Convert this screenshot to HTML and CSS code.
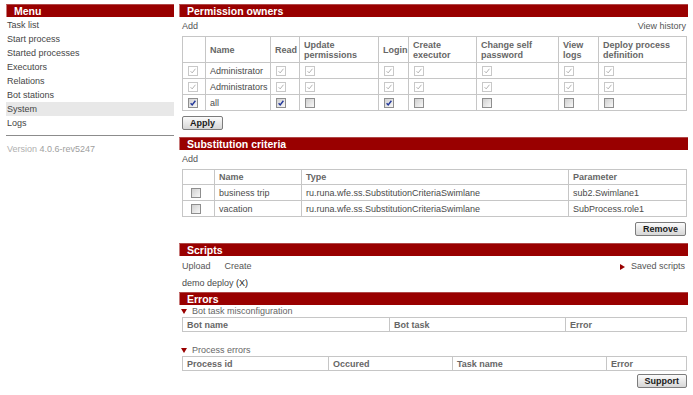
FILE: index.html
```html
<!DOCTYPE html>
<html>
<head>
<meta charset="utf-8">
<title>System</title>
<link rel="stylesheet" href="styles.css">
</head>
<body>
<div class="page">
  <aside class="sidebar">
    <div class="bar">Menu</div>
    <ul class="menu">
      <li>Task list</li>
      <li>Start process</li>
      <li>Started processes</li>
      <li>Executors</li>
      <li>Relations</li>
      <li>Bot stations</li>
      <li class="active">System</li>
      <li>Logs</li>
    </ul>
    <div class="divider"></div>
    <div class="version">Version <span class="ver-num">4.0.6-rev5247</span></div>
  </aside>

  <main class="main">
    <section class="section">
      <div class="bar">Permission owners</div>
      <div class="toolbar"><span class="link">Add</span><span class="link">View history</span></div>
      <table class="grid perm">
        <colgroup>
          <col class="p1"><col class="p2"><col class="p3"><col class="p4"><col class="p5">
          <col class="p6"><col class="p7"><col class="p8"><col class="p9">
        </colgroup>
        <thead>
          <tr>
            <th></th>
            <th>Name</th>
            <th>Read</th>
            <th>Update<br>permissions</th>
            <th>Login</th>
            <th>Create<br>executor</th>
            <th>Change self<br>password</th>
            <th>View<br>logs</th>
            <th>Deploy process<br>definition</th>
          </tr>
        </thead>
        <tbody>
          <tr>
            <td class="cbc"><span class="cb dis"><svg viewBox="0 0 8 8"><path d="M1.6 4.2 L3.2 5.9 L6.4 1.8"/></svg></span></td>
            <td>Administrator</td>
            <td class="cbc"><span class="cb dis"><svg viewBox="0 0 8 8"><path d="M1.6 4.2 L3.2 5.9 L6.4 1.8"/></svg></span></td>
            <td class="cbc"><span class="cb dis"><svg viewBox="0 0 8 8"><path d="M1.6 4.2 L3.2 5.9 L6.4 1.8"/></svg></span></td>
            <td class="cbc"><span class="cb dis"><svg viewBox="0 0 8 8"><path d="M1.6 4.2 L3.2 5.9 L6.4 1.8"/></svg></span></td>
            <td class="cbc"><span class="cb dis"><svg viewBox="0 0 8 8"><path d="M1.6 4.2 L3.2 5.9 L6.4 1.8"/></svg></span></td>
            <td class="cbc"><span class="cb dis"><svg viewBox="0 0 8 8"><path d="M1.6 4.2 L3.2 5.9 L6.4 1.8"/></svg></span></td>
            <td class="cbc"><span class="cb dis"><svg viewBox="0 0 8 8"><path d="M1.6 4.2 L3.2 5.9 L6.4 1.8"/></svg></span></td>
            <td class="cbc"><span class="cb dis"><svg viewBox="0 0 8 8"><path d="M1.6 4.2 L3.2 5.9 L6.4 1.8"/></svg></span></td>
          </tr>
          <tr>
            <td class="cbc"><span class="cb dis"><svg viewBox="0 0 8 8"><path d="M1.6 4.2 L3.2 5.9 L6.4 1.8"/></svg></span></td>
            <td>Administrators</td>
            <td class="cbc"><span class="cb dis"><svg viewBox="0 0 8 8"><path d="M1.6 4.2 L3.2 5.9 L6.4 1.8"/></svg></span></td>
            <td class="cbc"><span class="cb dis"><svg viewBox="0 0 8 8"><path d="M1.6 4.2 L3.2 5.9 L6.4 1.8"/></svg></span></td>
            <td class="cbc"><span class="cb dis"><svg viewBox="0 0 8 8"><path d="M1.6 4.2 L3.2 5.9 L6.4 1.8"/></svg></span></td>
            <td class="cbc"><span class="cb dis"><svg viewBox="0 0 8 8"><path d="M1.6 4.2 L3.2 5.9 L6.4 1.8"/></svg></span></td>
            <td class="cbc"><span class="cb dis"><svg viewBox="0 0 8 8"><path d="M1.6 4.2 L3.2 5.9 L6.4 1.8"/></svg></span></td>
            <td class="cbc"><span class="cb dis"><svg viewBox="0 0 8 8"><path d="M1.6 4.2 L3.2 5.9 L6.4 1.8"/></svg></span></td>
            <td class="cbc"><span class="cb dis"><svg viewBox="0 0 8 8"><path d="M1.6 4.2 L3.2 5.9 L6.4 1.8"/></svg></span></td>
          </tr>
          <tr>
            <td class="cbc"><span class="cb"><svg viewBox="0 0 8 8"><path d="M1.6 4.2 L3.2 5.9 L6.4 1.8"/></svg></span></td>
            <td>all</td>
            <td class="cbc"><span class="cb"><svg viewBox="0 0 8 8"><path d="M1.6 4.2 L3.2 5.9 L6.4 1.8"/></svg></span></td>
            <td class="cbc"><span class="cb"></span></td>
            <td class="cbc"><span class="cb"><svg viewBox="0 0 8 8"><path d="M1.6 4.2 L3.2 5.9 L6.4 1.8"/></svg></span></td>
            <td class="cbc"><span class="cb"></span></td>
            <td class="cbc"><span class="cb"></span></td>
            <td class="cbc"><span class="cb"></span></td>
            <td class="cbc"><span class="cb"></span></td>
          </tr>
        </tbody>
      </table>
      <div class="actions"><button class="btn">Apply</button></div>
    </section>

    <section class="section">
      <div class="bar">Substitution criteria</div>
      <div class="toolbar"><span class="link">Add</span></div>
      <table class="grid subst">
        <colgroup><col class="s1"><col class="s2"><col class="s3"><col class="s4"></colgroup>
        <thead>
          <tr><th></th><th>Name</th><th>Type</th><th>Parameter</th></tr>
        </thead>
        <tbody>
          <tr>
            <td class="cbc wide"><span class="cb"></span></td>
            <td>business trip</td>
            <td>ru.runa.wfe.ss.SubstitutionCriteriaSwimlane</td>
            <td>sub2.Swimlane1</td>
          </tr>
          <tr>
            <td class="cbc wide"><span class="cb"></span></td>
            <td>vacation</td>
            <td>ru.runa.wfe.ss.SubstitutionCriteriaSwimlane</td>
            <td>SubProcess.role1</td>
          </tr>
        </tbody>
      </table>
      <div class="actions right remove-row"><button class="btn">Remove</button></div>
    </section>

    <section class="section">
      <div class="bar">Scripts</div>
      <div class="tabs">
        <div class="tab-links"><span class="link">Upload</span><span class="link">Create</span></div>
        <span class="link saved"><span class="tri-right"></span>Saved scripts</span>
      </div>
      <div class="script-row">demo deploy <span class="remove">(X)</span></div>
    </section>

    <section class="errors">
      <div class="bar">Errors</div>
      <div class="group-title"><span class="tri-down"></span>Bot task misconfiguration</div>
      <table class="grid err">
        <colgroup><col class="b1"><col class="b2"><col class="b3"></colgroup>
        <thead><tr><th>Bot name</th><th>Bot task</th><th>Error</th></tr></thead>
      </table>
      <div class="group-title second"><span class="tri-down"></span>Process errors</div>
      <table class="grid err">
        <colgroup><col class="e1"><col class="e2"><col class="e3"><col class="e4"></colgroup>
        <thead><tr><th>Process id</th><th>Occured</th><th>Task name</th><th>Error</th></tr></thead>
      </table>
      <div class="actions right support"><button class="btn">Support</button></div>
    </section>
  </main>
</div>
</body>
</html>
```

FILE: styles.css
```css
* { box-sizing: border-box; }

body {
  margin: 0;
  font-family: "Liberation Sans", Arial, sans-serif;
  font-size: 9px;
  color: #4a4a4a;
  background: #fff;
}

.page {
  display: flex;
  align-items: flex-start;
  padding-top: 4px;
}

.sidebar {
  width: 168px;
  margin-left: 6px;
}

.main {
  width: 509px;
  margin-left: 5px;
}

.bar {
  height: 13px;
  background: #990000;
  color: #fff;
  font-weight: bold;
  font-size: 10.5px;
  line-height: 12px;
  padding-left: 7px;
  border-top: 1px solid #b04848;
  border-left: 1px solid #c87a7a;
}

.menu {
  list-style: none;
  margin: 1px 0 0;
  padding: 0;
}

.menu li {
  height: 14px;
  line-height: 14px;
  padding-left: 1px;
  color: #454545;
}

.menu li.active {
  background: #e8e8e8;
}

.divider {
  border-top: 1px solid #8c8c8c;
  margin-top: 5px;
}

.version {
  color: #b0b0b0;
  margin-top: 7px;
  line-height: 13px;
  padding-left: 1px;
}

.ver-num {
  color: #a0a0a0;
}

.toolbar {
  display: flex;
  justify-content: space-between;
  height: 19px;
  line-height: 19px;
  padding: 0 2px 0 3px;
}

.link {
  color: #555;
}

.grid {
  border-collapse: collapse;
  table-layout: fixed;
  width: 504px;
  margin-left: 3px;
}

.grid th,
.grid td {
  border: 1px solid #c6c6c6;
  padding: 0 4px;
  height: 16px;
  text-align: left;
  vertical-align: middle;
  white-space: nowrap;
  overflow: hidden;
  color: #4a4a4a;
}

.grid th {
  font-weight: bold;
  color: #666;
}

.perm thead th {
  height: 26px;
  line-height: 10px;
  white-space: normal;
}

.subst thead th {
  height: 15px;
}

.grid td.cbc {
  padding: 0 0 0 5px;
  line-height: 0;
}

.grid td.cbc.wide {
  padding-left: 8px;
}

.p1 { width: 23px; }
.p2 { width: 65px; }
.p3 { width: 29px; }
.p4 { width: 79px; }
.p5 { width: 30px; }
.p6 { width: 68px; }
.p7 { width: 82px; }
.p8 { width: 40px; }
.p9 { width: 88px; }

.s1 { width: 32px; }
.s2 { width: 87px; }
.s3 { width: 267px; }
.s4 { width: 118px; }

.b1 { width: 207px; }
.b2 { width: 176px; }
.b3 { width: 121px; }

.e1 { width: 146px; }
.e2 { width: 124px; }
.e3 { width: 154px; }
.e4 { width: 80px; }

.err th {
  height: 14px;
}

.cb {
  display: inline-block;
  width: 10px;
  height: 10px;
  border: 1px solid #8e8e8e;
  background: linear-gradient(135deg, #d0d0d0, #f8f8f8);
  vertical-align: middle;
}

.cb svg {
  display: block;
  width: 8px;
  height: 8px;
  fill: none;
  stroke: #22379a;
  stroke-width: 1.4;
}

.cb.dis {
  border-color: #c8c8c8;
  background: #fff;
}

.cb.dis svg {
  stroke: #b4b4b4;
  stroke-width: 1;
}

.actions {
  display: flex;
  margin: 5px 2px 0 3px;
}

.actions.right {
  justify-content: flex-end;
}

.actions.remove-row {
  margin-top: 5px;
}

.actions.support {
  margin-top: 3px;
  margin-right: 1px;
}

.btn {
  height: 14px;
  padding: 0 7px;
  font-family: "Liberation Sans", Arial, sans-serif;
  font-size: 9px;
  font-weight: bold;
  color: #1a1a1a;
  border: 1px solid #7c7c7c;
  border-radius: 2px;
  background: linear-gradient(#fbfbfb, #d6d6d6);
  line-height: 12px;
}

.section + .section {
  margin-top: 7px;
}

.tabs {
  display: flex;
  justify-content: space-between;
  height: 21px;
  line-height: 21px;
  padding: 0 3px 0 3px;
}

.tab-links {
  display: flex;
  gap: 14px;
}

.saved {
  display: flex;
  align-items: center;
}

.tri-right {
  display: inline-block;
  width: 0;
  height: 0;
  border-top: 3px solid transparent;
  border-bottom: 3px solid transparent;
  border-left: 5px solid #990000;
  margin-right: 6px;
}

.script-row {
  height: 13px;
  line-height: 13px;
  padding-left: 3px;
  margin-bottom: 2px;
}

.remove {
  color: #222;
}

.group-title {
  height: 12px;
  line-height: 12px;
  padding-left: 2px;
  color: #666;
  display: flex;
  align-items: center;
}

.group-title.second {
  margin-top: 12px;
}

.tri-down {
  display: inline-block;
  width: 0;
  height: 0;
  border-left: 3px solid transparent;
  border-right: 3px solid transparent;
  border-top: 5px solid #990000;
  margin-right: 5px;
}
```
